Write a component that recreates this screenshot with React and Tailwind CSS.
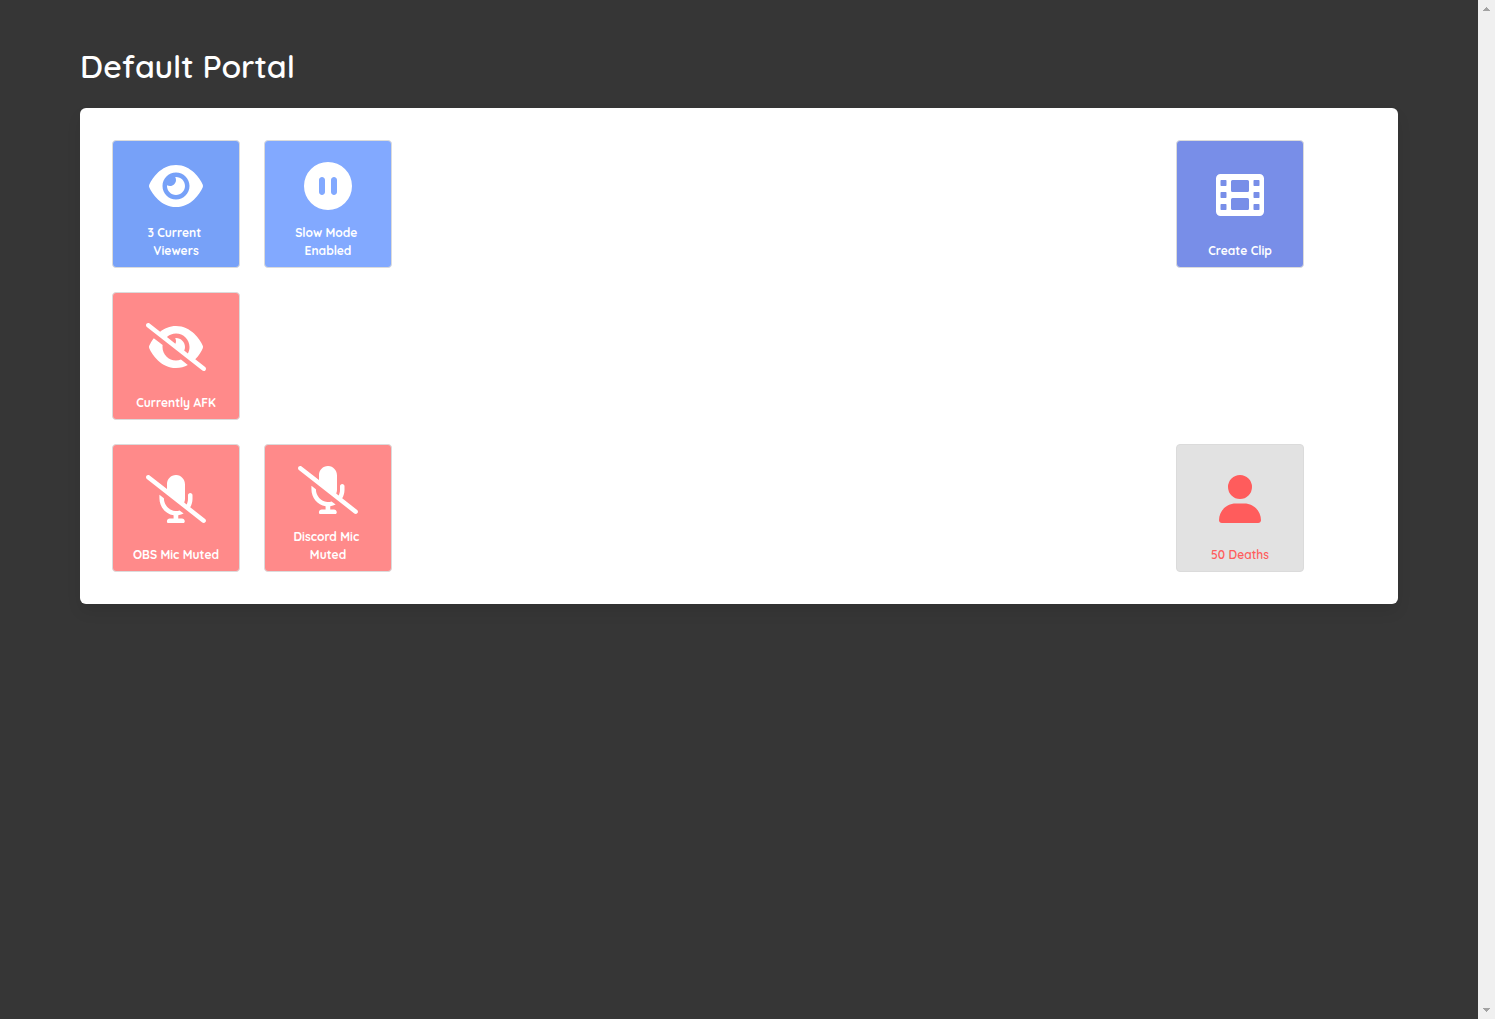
import React from "react";
import { FaCirclePause, FaUser } from "react-icons/fa6";

function EyeIcon(props) {
  return (
    <svg viewBox="0 0 576 512" fill="currentColor" {...props}>
      <path d="M279.600 160.400C282.400 160.100 285.200 160 288 160C341 160 384 202.100 384 256C384 309 341 352 288 352C234.100 352 192 309 192 256C192 253.200 192.100 250.400 192.400 247.600C201.700 252.100 212.500 256 224 256C259.300 256 288 227.300 288 192C288 180.500 285 169.700 279.600 160.400zM480.600 112.600C527.400 156 558.700 207.100 573.500 243.700C576.800 251.600 576.800 260.400 573.500 268.300C558.700 304 527.400 355.100 480.600 399.400C433.500 443.200 368.800 480 288 480C207.200 480 142.500 443.200 95.420 399.400C48.620 355.100 17.340 304 2.461 268.300C-.8205 260.400-.8205 251.600 2.461 243.700C17.340 207.100 48.620 156 95.420 112.600C142.500 68.840 207.200 32 288 32C368.800 32 433.500 68.840 480.600 112.600zM288 112C208.500 112 144 176.500 144 256C144 335.500 208.500 400 288 400C367.500 400 432 335.500 432 256C432 176.500 367.500 112 288 112z" />
    </svg>
  );
}

function EyeSlashIcon(props) {
  return (
    <svg viewBox="0 0 640 512" fill="currentColor" {...props}>
      <path d="M150.700 92.770C195 58.270 251.800 32 320 32C400.800 32 465.500 68.840 512.600 112.600C559.400 156 590.700 207.100 605.500 243.700C608.800 251.600 608.800 260.400 605.500 268.300C592.100 300.600 565.200 346.100 525.600 386.700L630.800 469.100C641.200 477.300 643.100 492.400 634.900 502.800C626.700 513.200 611.600 515.100 601.200 506.900L9.196 42.890C-1.236 34.710-3.065 19.630 5.112 9.196C13.290-1.236 28.370-3.065 38.810 5.112L150.700 92.770zM223.100 149.500L313.400 220.300C317.600 211.800 320 202.200 320 191.100C320 180.500 316.100 169.700 311.600 160.400C314.400 160.100 317.200 159.100 320 159.100C373 159.100 416 202.100 416 255.100C416 269.700 413.100 282.700 407.100 294.500L446.600 324.700C457.700 304.300 464 280.900 464 255.100C464 176.500 399.500 111.100 320 111.100C282.700 111.100 248.600 126.200 223.100 149.500zM320 480C239.200 480 174.500 443.200 127.400 399.400C80.620 355.100 49.340 304 34.460 268.300C31.180 260.400 31.180 251.600 34.460 243.700C44 220.800 60.290 191.200 83.090 161.500L177.400 235.800C176.500 242.400 176 249.100 176 255.100C176 335.500 240.500 400 320 400C338.700 400 356.600 396.400 373 389.900L446.200 447.500C409.900 467.100 367.800 480 320 480z" />
    </svg>
  );
}

function MicSlashIcon(props) {
  return (
    <svg viewBox="0 0 640 512" fill="currentColor" {...props}>
      <path d="M383.1 464l-39.1-.0001v-33.77c20.6-2.824 39.98-9.402 57.69-18.72l-43.26-33.91c-14.66 4.65-30.28 7.179-46.68 6.144C245.7 379.6 191.1 317.1 191.1 250.9V247.2L143.1 209.5l.0001 38.61c0 89.65 63.97 169.6 151.1 181.7v34.15l-40 .0001c-17.67 0-31.1 14.33-31.1 31.1C223.1 504.8 231.2 512 239.1 512h159.1c8.838 0 15.1-7.164 15.1-16C415.1 478.3 400.8 464 383.1 464zM630.8 469.1l-159.3-124.9c15.37-25.94 24.53-55.91 24.53-88.21V216c0-13.25-10.75-24-24-24c-13.25 0-24 10.75-24 24l-.0001 39.1c0 21.12-5.559 40.77-14.77 58.24l-25.72-20.16c5.234-11.68 8.493-24.42 8.493-38.08l-.001-155.1c0-52.57-40.52-98.41-93.07-99.97c-54.37-1.617-98.93 41.95-98.93 95.95l0 54.25L38.81 5.111C34.41 1.673 29.19 0 24.03 0C16.91 0 9.839 3.158 5.12 9.189c-8.187 10.44-6.37 25.53 4.068 33.7l591.1 463.1c10.5 8.203 25.57 6.328 33.69-4.078C643.1 492.4 641.2 477.3 630.8 469.1z" />
    </svg>
  );
}

function FilmIcon(props) {
  return (
    <svg viewBox="0 0 512 512" fill="currentColor" {...props}>
      <path
        fillRule="evenodd"
        d="M48 32H464a48 48 0 0 1 48 48V432a48 48 0 0 1-48 48H48a48 48 0 0 1-48-48V80a48 48 0 0 1 48-48zM56 96a8 8 0 0 0-8 8v48a8 8 0 0 0 8 8h48a8 8 0 0 0 8-8v-48a8 8 0 0 0-8-8zM56 224a8 8 0 0 0-8 8v48a8 8 0 0 0 8 8h48a8 8 0 0 0 8-8v-48a8 8 0 0 0-8-8zM56 352a8 8 0 0 0-8 8v48a8 8 0 0 0 8 8h48a8 8 0 0 0 8-8v-48a8 8 0 0 0-8-8zM408 96a8 8 0 0 0-8 8v48a8 8 0 0 0 8 8h48a8 8 0 0 0 8-8v-48a8 8 0 0 0-8-8zM408 224a8 8 0 0 0-8 8v48a8 8 0 0 0 8 8h48a8 8 0 0 0 8-8v-48a8 8 0 0 0-8-8zM408 352a8 8 0 0 0-8 8v48a8 8 0 0 0 8 8h48a8 8 0 0 0 8-8v-48a8 8 0 0 0-8-8zM176 96a16 16 0 0 0-16 16v96a16 16 0 0 0 16 16H336a16 16 0 0 0 16-16v-96a16 16 0 0 0-16-16zM176 288a16 16 0 0 0-16 16v96a16 16 0 0 0 16 16H336a16 16 0 0 0 16-16v-96a16 16 0 0 0-16-16z"
      />
    </svg>
  );
}

const BUTTONS = [
  { label: "3 Current \nViewers", icon: EyeIcon, style: "col-start-1 row-start-1 bg-[#77a1f8] text-white font-bold" },
  { label: "Slow Mode \nEnabled", icon: FaCirclePause, style: "col-start-2 row-start-1 bg-[#82a9ff] text-white font-bold" },
  { label: "Create Clip", icon: FilmIcon, style: "col-start-8 row-start-1 bg-[#788ee8] text-white font-bold" },
  { label: "Currently AFK", icon: EyeSlashIcon, style: "col-start-1 row-start-2 bg-[#ff8a8a] text-white font-bold" },
  { label: "OBS Mic Muted", icon: MicSlashIcon, style: "col-start-1 row-start-3 bg-[#ff8a8a] text-white font-bold" },
  { label: "Discord Mic \nMuted", icon: MicSlashIcon, style: "col-start-2 row-start-3 bg-[#ff8a8a] text-white font-bold" },
  { label: "50 Deaths", icon: FaUser, style: "col-start-8 row-start-3 bg-[#e2e2e2] text-[#ff5c5c] font-semibold" },
];

function PortalButton({ label, icon: Icon, style }) {
  return (
    <button
      type="button"
      className={`flex size-32 flex-col items-center rounded border border-[#dbdbdb] p-[7px] text-xs/[18px] ${style}`}
    >
      <span className="flex flex-1 items-center">
        <Icon className="h-12 w-[60px]" aria-hidden="true" />
      </span>
      <span className="whitespace-pre text-center">{label}</span>
    </button>
  );
}

function ScrollTrack() {
  return (
    <div className="sticky top-0 flex h-screen w-[17px] shrink-0 flex-col items-center justify-between bg-[#f0f0f0] py-[7px]" aria-hidden="true">
      <svg width="7" height="4" viewBox="0 0 7 4" fill="#a3a3a3" shapeRendering="crispEdges">
        <path d="M3 0h1v1h1v1h1v1h1v1H0V3h1V2h1V1h1z" />
      </svg>
      <svg width="7" height="4" viewBox="0 0 7 4" fill="#a3a3a3" shapeRendering="crispEdges">
        <path d="M0 0h7v1H6v1H5v1H4v1H3V3H2V2H1V1H0z" />
      </svg>
    </div>
  );
}

export default function App() {
  return (
    <div className="flex min-h-screen bg-[#363636] font-['Quicksand','Lato',sans-serif]">
      <main className="min-w-0 flex-1 px-20 pt-12">
        <h1 className="text-[32px]/9 font-semibold text-white">Default Portal</h1>
        <section className="mt-6 grid grid-cols-[repeat(8,128px)] grid-rows-[repeat(3,128px)] gap-6 rounded-md bg-white p-8 shadow-[0_8px_16px_-2px_rgba(10,10,10,0.1)]">
          {BUTTONS.map((button) => (
            <PortalButton key={button.label} {...button} />
          ))}
        </section>
      </main>
      <ScrollTrack />
    </div>
  );
}
